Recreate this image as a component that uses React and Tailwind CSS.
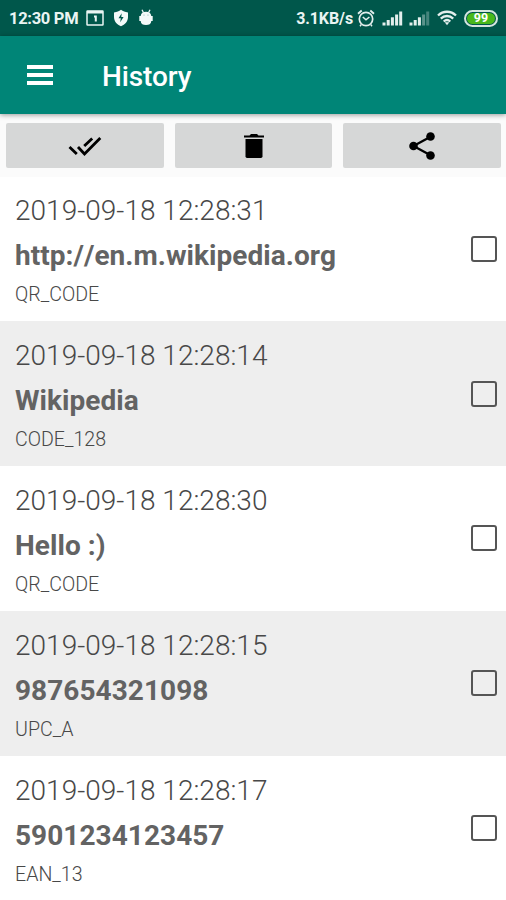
import React, { useState } from 'react';

const HISTORY = [
  { id: 1, date: '2019-09-18 12:28:31', value: 'http://en.m.wikipedia.org', format: 'QR_CODE' },
  { id: 2, date: '2019-09-18 12:28:14', value: 'Wikipedia', format: 'CODE_128' },
  { id: 3, date: '2019-09-18 12:28:30', value: 'Hello :)', format: 'QR_CODE' },
  { id: 4, date: '2019-09-18 12:28:15', value: '987654321098', format: 'UPC_A' },
  { id: 5, date: '2019-09-18 12:28:17', value: '5901234123457', format: 'EAN_13' },
];

function Signal({ weak }) {
  return (
    <svg width="21" height="15" viewBox="0 0 21 15" fill="#e3efed" className="shrink-0">
      <rect x="0.5" y="11.5" width="3" height="3" />
      <rect x="4.7" y="9" width="3" height="5.5" />
      <rect x="8.9" y="6.3" width="3" height="8.2" />
      <rect x="13.1" y="3.5" width="3" height="11" opacity={weak ? 0.4 : 1} />
      <rect x="17.2" y="0.5" width="3" height="14" opacity={weak ? 0.3 : 1} />
    </svg>
  );
}

function StatusBar() {
  return (
    <div className="flex h-9 shrink-0 items-center bg-[#00574b] pl-[9px] pr-[8px] text-[#eaf5f3]">
      <span className="w-[77px] whitespace-nowrap pt-[2px] text-[16.5px] font-bold leading-[34px] tracking-[-0.3px]">12:30 PM</span>
      {/* notification icons */}
      <svg width="18" height="16" viewBox="0 0 18 16" className="shrink-0">
        <rect x="1" y="1" width="16" height="14" rx="0.5" fill="none" stroke="#eaf5f3" strokeWidth="1.5" />
        <path d="M1 2.2h16" stroke="#eaf5f3" strokeWidth="2.6" />
        <path d="M8 6.5h1.8v5" fill="none" stroke="#eaf5f3" strokeWidth="2" />
      </svg>
      <svg width="16" height="18" viewBox="0 0 16 18" className="ml-[9px] shrink-0">
        <path d="M8 .8c2 1.7 4 2.3 7 2.6V8c0 4.5-3 7.5-7 9.3C4 15.5 1 12.5 1 8V3.4C4 3.1 6 2.5 8 .8z" fill="#f4faf9" />
        <path d="M8.7 4.3 5.5 9.2h2.3l-.6 4 3.4-5.2H8.3z" fill="#00574b" />
      </svg>
      <svg width="14" height="17" viewBox="0 0 14 17" className="mb-[1px] ml-[10px] shrink-0">
        <path d="m3 .8 1.5 3M11 .8l-1.5 3" stroke="#eaf5f3" strokeWidth="1.3" />
        <path d="M1.7 7C2 4 4.3 2.7 7 2.7S12 4 12.3 7h1.4v5h-1.4c-.2 3-2.3 4-5.300 4s-5.100-1-5.300-4H.3V7z" fill="#f4faf9" />
        <path d="M4.5 6.2h1M8.5 6.2h1" stroke="#9fc6bf" strokeWidth="1.2" />
      </svg>

      <span className="ml-auto whitespace-nowrap pt-[2px] text-[16px] font-bold leading-[34px] tracking-[-0.1px]">3.1KB/s</span>
      <svg width="18" height="19" viewBox="0 0 18 19" fill="none" stroke="#e3efed" className="ml-[4px] shrink-0">
        <circle cx="9" cy="10" r="6.7" strokeWidth="1.7" />
        <path d="M1 4.7 4.7 1.6M17 4.7l-3.7-3.1" strokeWidth="1.9" />
        <path d="M5.8 8 9 10.8 12.4 8" strokeWidth="1.6" />
        <path d="m4.3 15.5-1.3 1.7M13.7 15.5l1.3 1.7" strokeWidth="1.4" />
      </svg>
      <span className="ml-[7px] flex gap-[6px]">
        <Signal />
        <Signal weak />
      </span>
      <svg width="20" height="16" viewBox="0 0 20 16" fill="none" stroke="#e3efed" strokeWidth="2.3" className="ml-[7px] shrink-0">
        <path d="M1 5.5c5.200-5 12.800-5 18 0M3.800 8.600c3.600-3.500 8.800-3.500 12.400 0M6.700 11.500c2-1.800 4.600-1.800 6.600 0" />
        <path d="M7.700 12.200h4.600L10 15.200z" fill="#e3efed" stroke="none" />
      </svg>
      <span className="ml-[7px] flex h-[17px] w-[34px] items-center justify-center rounded-full border-2 border-[#d5e5df] bg-[#00574b] p-px">
        <span className="flex h-full w-full items-center justify-center rounded-full bg-[#48b81c] text-[12.5px] font-bold leading-none text-white">99</span>
      </span>
    </div>
  );
}

function AppBar() {
  return (
    <header className="relative z-10 flex h-[78px] shrink-0 items-center bg-[#008577] pl-[27px] shadow-[0_1px_5px_rgba(0,0,0,0.4)]">
      <button type="button" aria-label="Menu" className="mb-[1px] flex w-[26px] flex-col gap-[4px]">
        <span className="h-[4px] bg-white" />
        <span className="h-[4px] bg-white" />
        <span className="h-[4px] bg-white" />
      </button>
      <h1 className="ml-[49px] pt-[3px] text-[28px] font-medium leading-8 tracking-[-0.1px] text-white">History</h1>
    </header>
  );
}

function ToolButton({ label, onClick, children }) {
  return (
    <button
      type="button"
      aria-label={label}
      onClick={onClick}
      className="flex h-[45px] flex-1 items-center justify-center rounded-[2px] bg-[#d6d7d7]"
    >
      {children}
    </button>
  );
}

function HistoryRow({ item, checked, onToggle }) {
  return (
    <li className="flex h-[144.8px] items-center justify-between pl-[15px] pr-[9px] text-[#636363] odd:bg-white even:bg-[#eeeeee]">
      <div className="pt-[2px]">
        <div className="text-[28px] leading-[45px] font-light tracking-[0.02px] text-[#484848]">{item.date}</div>
        <div className="text-[28px] leading-[45px] font-bold tracking-[0.05px] [font-kerning:none]">{item.value}</div>
        <div className="pt-[1px] text-[19.6px] leading-[32px] font-light text-[#484848]">{item.format}</div>
      </div>
      <button
        type="button"
        role="checkbox"
        aria-checked={checked}
        aria-label={item.value}
        onClick={onToggle}
        className={`h-[26px] w-[26px] rounded-[3px] border-2 border-[#555555] ${checked ? 'bg-[#008577]' : ''}`}
      />
    </li>
  );
}

export default function App() {
  const [items, setItems] = useState(HISTORY);
  const [selected, setSelected] = useState([]);

  const toggle = (id) => {
    setSelected(selected.includes(id) ? selected.filter((s) => s !== id) : [...selected, id]);
  };

  const selectAll = () => {
    setSelected(selected.length === items.length ? [] : items.map((i) => i.id));
  };

  const removeSelected = () => {
    setItems(items.filter((i) => !selected.includes(i.id)));
    setSelected([]);
  };

  return (
    <div className="flex h-[900px] w-[506px] flex-col overflow-hidden bg-white font-['Roboto',sans-serif]">
      <StatusBar />
      <AppBar />
      <div className="flex h-[62.5px] shrink-0 gap-[11px] bg-[#fbfbfb] pl-[6px] pr-[5px] pt-[9px]">
        <ToolButton label="Select all" onClick={selectAll}>
          <svg width="34" height="22" viewBox="0 0 34 22" fill="none" stroke="#000" strokeWidth="2.8">
            <path d="m1.5 12 7.300 7M10 12l6.500 7L32.300 3M16.200 11l8-7.500" />
          </svg>
        </ToolButton>
        <ToolButton label="Delete" onClick={removeSelected}>
          <svg width="22" height="26" viewBox="0 0 22 26">
            <path d="M1 2.500h5.500L8 1h6l1.500 1.500H21v2H1zM2.500 6h17v18l-1.300 1H3.800l-1.300-1z" />
          </svg>
        </ToolButton>
        <ToolButton label="Share">
          <svg width="28" height="28" viewBox="0 0 28 28">
            <path d="M23 4.500 5.500 14 23 23.500" fill="none" stroke="#000" strokeWidth="2.300" />
            <circle cx="5.500" cy="14" r="4.300" />
            <circle cx="22.500" cy="4.500" r="4.300" />
            <circle cx="22.500" cy="23.500" r="4.300" />
          </svg>
        </ToolButton>
      </div>
      <ul>
        {items.map((item) => (
          <HistoryRow
            key={item.id}
            item={item}
            checked={selected.includes(item.id)}
            onToggle={() => toggle(item.id)}
          />
        ))}
      </ul>
    </div>
  );
}
